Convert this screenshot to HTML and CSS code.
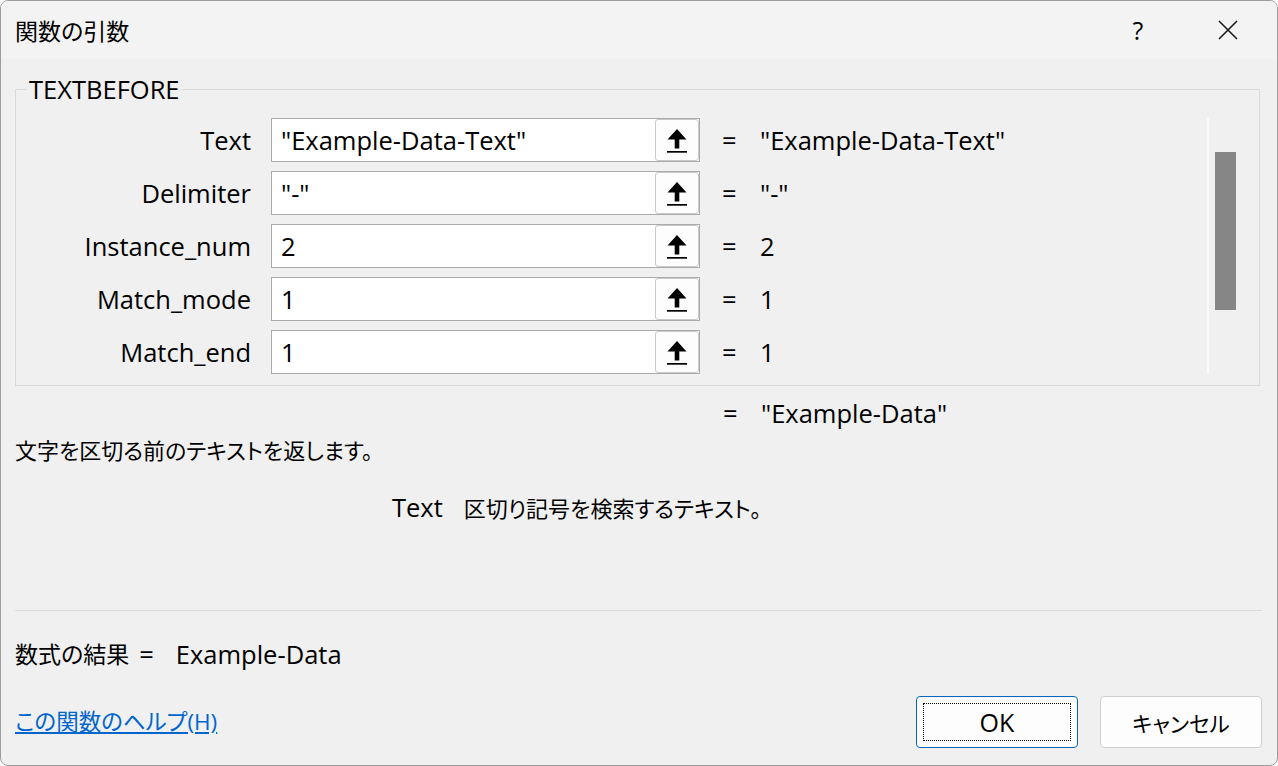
FILE: index.html
```html
<!DOCTYPE html>
<html lang="ja">
<head>
    <meta charset="UTF-8">
    <title>関数の引数</title>
    <link rel="stylesheet" href="styles.css">
</head>
<body>
    <div class="window">
        <div class="titlebar">
            <span class="title">関数の引数</span>
            <span class="help-btn">?</span>
            <span class="close-btn">
                <svg width="22" height="22" viewBox="0 0 22 22"><path d="M2 2 L20 20 M20 2 L2 20" stroke="#1a1a1a" stroke-width="1.6" fill="none"/></svg>
            </span>
        </div>

        <div class="content">
            <fieldset class="group">
                <legend>TEXTBEFORE</legend>
                <div class="group-inner">
                    <div class="args">
                        <div class="arg-row">
                            <label>Text</label>
                            <div class="arg-input"><span class="arg-text">"Example-Data-Text"</span><span class="ref-btn"><svg width="22" height="28" viewBox="0 0 22 28"><path d="M11 3 L1.5 13.5 L8.7 13.5 L8.7 22.5 L13.3 22.5 L13.3 13.5 L20.5 13.5 Z" fill="#000"/><rect x="1" y="25" width="20" height="1.7" fill="#000"/></svg></span></div>
                            <span class="eq">=</span>
                            <span class="arg-val">"Example-Data-Text"</span>
                        </div>
                        <div class="arg-row">
                            <label>Delimiter</label>
                            <div class="arg-input"><span class="arg-text">"-"</span><span class="ref-btn"><svg width="22" height="28" viewBox="0 0 22 28"><path d="M11 3 L1.5 13.5 L8.7 13.5 L8.7 22.5 L13.3 22.5 L13.3 13.5 L20.5 13.5 Z" fill="#000"/><rect x="1" y="25" width="20" height="1.7" fill="#000"/></svg></span></div>
                            <span class="eq">=</span>
                            <span class="arg-val">"-"</span>
                        </div>
                        <div class="arg-row">
                            <label>Instance_num</label>
                            <div class="arg-input"><span class="arg-text">2</span><span class="ref-btn"><svg width="22" height="28" viewBox="0 0 22 28"><path d="M11 3 L1.5 13.5 L8.7 13.5 L8.7 22.5 L13.3 22.5 L13.3 13.5 L20.5 13.5 Z" fill="#000"/><rect x="1" y="25" width="20" height="1.7" fill="#000"/></svg></span></div>
                            <span class="eq">=</span>
                            <span class="arg-val">2</span>
                        </div>
                        <div class="arg-row">
                            <label>Match_mode</label>
                            <div class="arg-input"><span class="arg-text">1</span><span class="ref-btn"><svg width="22" height="28" viewBox="0 0 22 28"><path d="M11 3 L1.5 13.5 L8.7 13.5 L8.7 22.5 L13.3 22.5 L13.3 13.5 L20.5 13.5 Z" fill="#000"/><rect x="1" y="25" width="20" height="1.7" fill="#000"/></svg></span></div>
                            <span class="eq">=</span>
                            <span class="arg-val">1</span>
                        </div>
                        <div class="arg-row">
                            <label>Match_end</label>
                            <div class="arg-input"><span class="arg-text">1</span><span class="ref-btn"><svg width="22" height="28" viewBox="0 0 22 28"><path d="M11 3 L1.5 13.5 L8.7 13.5 L8.7 22.5 L13.3 22.5 L13.3 13.5 L20.5 13.5 Z" fill="#000"/><rect x="1" y="25" width="20" height="1.7" fill="#000"/></svg></span></div>
                            <span class="eq">=</span>
                            <span class="arg-val">1</span>
                        </div>
                    </div>
                    <div class="scrollbar">
                        <div class="scroll-thumb"></div>
                    </div>
                </div>
            </fieldset>

            <div class="result-line">
                <span class="eq">=</span>
                <span class="arg-val">"Example-Data"</span>
            </div>

            <p class="desc">文字を区切る前のテキストを返します。</p>

            <p class="arg-help"><span class="arg-help-name">Text</span>区切り記号を検索するテキスト。</p>

            <div class="separator"></div>

            <div class="formula-result"><span class="formula-label">数式の結果</span><span class="formula-eq">=</span><span class="formula-val">Example-Data</span></div>

            <div class="footer">
                <a href="#" class="help-link">この関数のヘルプ(H)</a>
                <div class="buttons">
                    <button class="dlg-btn dlg-btn-default"><span class="focus-rect">OK</span></button>
                    <button class="dlg-btn dlg-btn-cjk">キャンセル</button>
                </div>
            </div>
        </div>
    </div>
</body>
</html>
```

FILE: styles.css
```css
* {
    box-sizing: border-box;
}
html, body {
    margin: 0;
    padding: 0;
    background: #ffffff;
}
body {
    font-family: 'Open Sans', 'Noto Sans CJK JP', sans-serif;
    font-size: 25.5px;
    font-feature-settings: "palt";
    color: #000;
}
.window {
    width: 1278px;
    height: 766px;
    border: 1px solid #9c9c9c;
    border-radius: 8px;
    background: #f0f0f0;
    overflow: hidden;
    display: flex;
    flex-direction: column;
}
.titlebar {
    height: 58px;
    background: #f3f3f3;
    display: flex;
    align-items: center;
    padding-left: 14px;
    flex-shrink: 0;
}
.title {
    font-family: 'Noto Sans CJK JP', sans-serif;
    font-size: 23px;
    flex-grow: 1;
}
.help-btn {
    font-size: 25px;
    width: 20px;
    text-align: center;
    margin-right: 69px;
}
.close-btn {
    display: flex;
    margin-right: 38px;
}
.content {
    padding: 0 15px 0 14px;
    display: flex;
    flex-direction: column;
    flex-grow: 1;
}
.group {
    margin: 15px 2px 0 0;
    padding: 14px 0 11px 0;
    border: 1px solid #dadada;
    min-width: 0;
}
.group legend {
    line-height: 30px;
    padding: 0 2px;
    margin-left: 11px;
}
.group-inner {
    display: flex;
}
.args {
    flex-grow: 1;
}
.arg-row {
    display: flex;
    align-items: center;
    height: 44px;
    margin-bottom: 9px;
}
.arg-row:last-child {
    margin-bottom: 0;
}
.arg-row label {
    width: 235px;
    text-align: right;
    margin-right: 20px;
}
.arg-input {
    width: 429px;
    height: 44px;
    background: #fff;
    border: 1px solid #ababab;
    display: flex;
    align-items: center;
}
.arg-text {
    flex-grow: 1;
    padding-left: 9px;
}
.ref-btn {
    width: 44px;
    height: 42px;
    border: 1px solid #c9c9c9;
    border-radius: 3px;
    background: #fdfdfd;
    display: flex;
    align-items: center;
    justify-content: center;
}
.eq {
    margin-left: 22px;
    width: 38px;
}
.scrollbar {
    width: 52px;
    border-left: 2px solid #fbfbfb;
    padding: 34px 0 0 6px;
}
.scroll-thumb {
    width: 21px;
    height: 158px;
    background: #868686;
}
.result-line {
    display: flex;
    padding-left: 708px;
    height: 30px;
    line-height: 30px;
    margin-top: 12px;
}
.result-line .eq {
    margin-left: 0;
}
.desc {
    margin: 7px 0 0 0;
    line-height: 30px;
    font-size: 22px;
}
.arg-help {
    margin: 27px 0 0 377px;
    line-height: 30px;
    font-size: 22px;
}
.arg-help-name {
    font-size: 25.5px;
    margin-right: 21px;
}
.separator {
    height: 1px;
    background: #dcdcdc;
    margin-top: 87px;
}
.formula-result {
    margin-top: 28px;
    line-height: 30px;
    display: flex;
    align-items: center;
}
.formula-label {
    font-size: 23px;
}
.formula-eq {
    margin-left: 10px;
}
.formula-val {
    margin-left: 22px;
}
.footer {
    display: flex;
    align-items: center;
    margin-top: 27px;
}
.help-link {
    color: #0066cc;
    font-size: 22.5px;
    flex-grow: 1;
    margin-bottom: 4px;
}
.buttons {
    display: flex;
    gap: 22px;
}
.dlg-btn {
    width: 162px;
    height: 52px;
    border: 1px solid #d0d0d0;
    border-radius: 4px;
    background: #fdfdfd;
    font-family: 'Open Sans', 'Noto Sans CJK JP', sans-serif;
    font-feature-settings: "palt";
    font-size: 25px;
    color: #000;
    padding: 0;
}
.dlg-btn-cjk {
    font-size: 21.5px;
}
.dlg-btn-default {
    border-color: #0067c0;
    padding: 6px;
}
.focus-rect {
    display: flex;
    align-items: center;
    justify-content: center;
    height: 100%;
    border: 1px dotted #000;
}
```
